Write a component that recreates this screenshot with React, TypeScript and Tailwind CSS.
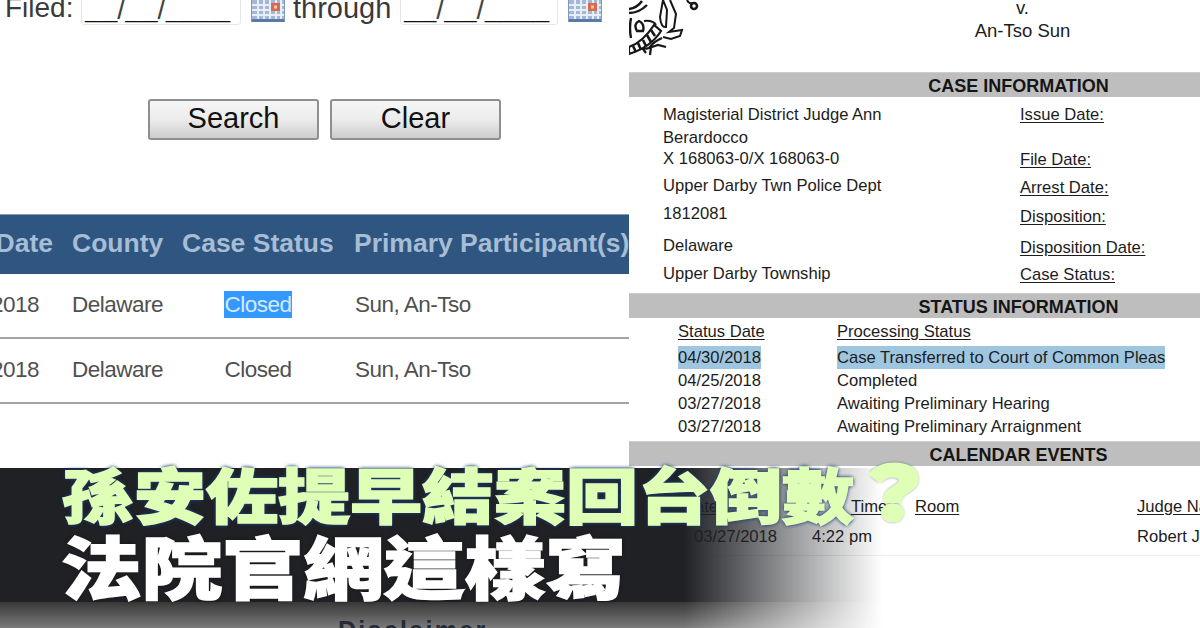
const sans = "font-['Liberation_Sans',Arial,sans-serif]";

function CalIcon() {
  return (
    <svg viewBox="0 0 34 22" className="w-[34px] h-[22px] mt-[8px] shrink-0">
      <rect width="34" height="22" fill="#a3b7d9" />
      <rect y="19" width="34" height="3" fill="#5c7aa6" />
      <rect x="0" width="1" height="22" fill="#7f98bf" />
      <rect x="33" width="1" height="22" fill="#7f98bf" />
      {[6, 12, 18, 24, 29].map((x) => (
        <rect key={x} x={x} y="0" width="2" height="19" fill="#e8eef8" />
      ))}
      {[4, 9, 14].map((y) => (
        <rect key={y} x="1" y={y} width="32" height="2" fill="#e8eef8" />
      ))}
      <rect x="20" y="3" width="9" height="8" fill="#d9694a" />
      <rect x="23" y="5.5" width="3" height="3" fill="#f3c9b4" />
    </svg>
  );
}

function Crest() {
  return (
    <svg viewBox="0 0 72 60" className="w-[72px] h-[60px] shrink-0" fill="none" stroke="#161616" strokeWidth="2">
      <path d="M34 0 L31 17 Q32 28 37 27 L38 10 L34 0" />
      <path d="M41 0 L47 14 L45 28 L40 32 L53 30 L51 36 L42 39 L34 37" />
      <path d="M0 9 Q8 8 13 1 M0 13 Q10 13 18 5" strokeWidth="2.4" />
      <circle cx="65" cy="6" r="3" strokeWidth="2.6" />
      <path d="M58 0 Q60 4 63 3" />
      <path d="M0 47 Q14 42 25 25 L32 31 Q22 47 0 54 Z" strokeWidth="2.2" />
      <path d="M4 46 L7 52 M9 43 L12 50 M14 40 L17 46 M18 35 L22 42 M22 30 L26 36" strokeWidth="2.6" />
      <path d="M8 31 Q4 24 10 21 Q16 24 14 31 Z M2 18 Q0 28 2 38" strokeWidth="2.4" />
      <path d="M15 21 Q24 20 27 25" />
      <path d="M33 38 Q24 42 20 48 L29 45 L37 47 M20 48 L14 49 L17 53 M22 47 L21 55" strokeWidth="2.2" />
    </svg>
  );
}

function Bar({ children }: { children: string }) {
  return (
    <div className="h-[25px] bg-[#bebebe] border-t border-[#cdcdcd] flex items-center justify-center pl-[208px] pt-[2px] text-[18px] font-bold text-[#151515] leading-none shrink-0">
      {children}
    </div>
  );
}

function U({ children }: { children: string }) {
  return <span className="underline underline-offset-[2px]">{children}</span>;
}

function Mask({ w }: { w: string }) {
  return (
    <div className={`${w} h-[33px] border border-[#e6e6e6] rounded-[3px] pl-[3px] text-[29px] text-[#111] overflow-hidden whitespace-nowrap`}>
      <span className="font-bold">__</span>
      <span className="font-normal text-[#444]">/</span>
      <span className="font-bold">__</span>
      <span className="font-normal text-[#444]">/</span>
      <span className="font-bold">____</span>
    </div>
  );
}

const statusRows = [
  ["04/25/2018", "Completed"],
  ["03/27/2018", "Awaiting Preliminary Hearing"],
  ["03/27/2018", "Awaiting Preliminary Arraignment"],
];

export default function App() {
  return (
    <div className={`relative w-[1200px] h-[628px] overflow-hidden bg-white flex ${sans}`}>
      {/* Left panel */}
      <div className="w-[629px] shrink-0 h-full overflow-hidden flex flex-col">
        <div className="flex items-start -mt-[8px] h-[33px] text-[29px] leading-[32px] text-[#3a3a3a] shrink-0">
          <div className="w-[81px] pl-[5px] text-[28px]">Filed:</div>
          <Mask w="w-[160px]" />
          <div className="ml-[10px]"><CalIcon /></div>
          <div className="ml-[8px] w-[107px]">through</div>
          <Mask w="w-[158px]" />
          <div className="ml-[10px]"><CalIcon /></div>
        </div>

        <div className="flex gap-[11px] ml-[148px] mt-[74px] shrink-0">
          {["Search", "Clear"].map((t) => (
            <div key={t} className="w-[171px] h-[41px] pb-[2px] rounded-[3px] border-2 border-[#8f8f8f] bg-gradient-to-b from-[#f6f6f6] via-[#ececec] to-[#cdcdcd] flex items-center justify-center text-[29px] text-[#111] leading-none">
              {t}
            </div>
          ))}
        </div>

        <div className="mt-[74px] shrink-0 h-[60px] pb-[2px] bg-[#2f5680] border-t border-[#8a9bb0] grid grid-cols-[72px_110px_172px_1fr] items-center text-[26.5px] font-bold text-[#a7bdd5] whitespace-nowrap leading-none">
          <div className="flex justify-end pr-[19px] overflow-hidden">Date</div>
          <div>County</div>
          <div>Case Status</div>
          <div>Primary Participant(s)</div>
        </div>
        {[true, false].map((hl, i) => (
          <div key={i} className="h-[65px] shrink-0 pb-[1px] border-b-2 border-[#a3a3a3] grid grid-cols-[72px_110px_172px_1fr] items-center text-[22.5px] tracking-[-0.5px] text-[#505050] whitespace-nowrap">
            <div className="flex justify-end pr-[33px] overflow-hidden">2018</div>
            <div>Delaware</div>
            <div className="pr-[20px] text-center">
              <span className={hl ? "bg-[#3399ff] text-[#d6e9fc] py-[1px]" : ""}>Closed</span>
            </div>
            <div className="pl-[1px]">Sun, An-Tso</div>
          </div>
        ))}
        <div className="mt-[212px] ml-[338px] text-[25px] font-bold tracking-[2.3px] text-[#2b3d55] leading-[28px] shrink-0">Disclaimer</div>
      </div>

      {/* Right panel */}
      <div className="flex-1 min-w-0 h-full flex flex-col overflow-hidden text-[16.6px] text-[#1c1c1c]">
        <div className="flex h-[72px] shrink-0">
          <Crest />
          <div className="flex-1 pl-[144px] text-center text-[18.5px] leading-[23px] -mt-[4px]">
            <div>v.</div>
            <div>An-Tso Sun</div>
          </div>
        </div>
        <Bar>CASE INFORMATION</Bar>

        <div className="h-[196px] shrink-0 flex pt-[6px] leading-[23px] whitespace-nowrap">
          <div className="w-[391px] pl-[34px] flex flex-col">
            <div>Magisterial District Judge Ann</div>
            <div>Berardocco</div>
            <div className="-mt-[2px]">X 168063-0/X 168063-0</div>
            <div className="mt-[4px]">Upper Darby Twn Police Dept</div>
            <div className="mt-[5px]">1812081</div>
            <div className="mt-[9px]">Delaware</div>
            <div className="mt-[5px]">Upper Darby Township</div>
          </div>
          <div className="flex flex-col">
            <U>Issue Date:</U>
            <div className="mt-[22px]"><U>File Date:</U></div>
            <div className="mt-[5px]"><U>Arrest Date:</U></div>
            <div className="mt-[6px]"><U>Disposition:</U></div>
            <div className="mt-[8px]"><U>Disposition Date:</U></div>
            <div className="mt-[4px]"><U>Case Status:</U></div>
          </div>
        </div>

        <Bar>STATUS INFORMATION</Bar>

        <div className="h-[123px] shrink-0 flex flex-col pl-[49px] leading-[23px] whitespace-nowrap pt-[2px]">
          <div className="grid grid-cols-[159px_1fr] mb-[3px]">
            <U>Status Date</U>
            <U>Processing Status</U>
          </div>
          <div className="grid grid-cols-[159px_1fr]">
            <div><span className="bg-[#9fc6e0] py-[2px]">04/30/2018</span></div>
            <div><span className="bg-[#9fc6e0] py-[2px]">Case Transferred to Court of Common Pleas</span></div>
          </div>
          {statusRows.map(([d, s], i) => (
            <div key={i} className="grid grid-cols-[159px_1fr]">
              <div>{d}</div>
              <div>{s}</div>
            </div>
          ))}
        </div>

        <Bar>CALENDAR EVENTS</Bar>

        <div className="h-[90px] shrink-0 border-b border-[#eeeeee] pt-[29px] leading-[23px] whitespace-nowrap grid grid-cols-[54px_129px_103px_222px_1fr] grid-rows-[30px_23px]">
          <div className="col-start-2"><U>Date</U></div>
          <div className="pl-[39px]"><U>Time</U></div>
          <div className="col-start-4"><U>Room</U></div>
          <div className="col-start-5"><U>Judge Name</U></div>
          <div className="col-start-2 pl-[11px]">03/27/2018</div>
          <div>4:22 pm</div>
          <div className="col-start-5">Robert J</div>
        </div>
      </div>

      {/* Banner overlay */}
      <div className="absolute left-0 top-[468px] w-[900px] h-[160px] flex flex-col [mask-image:linear-gradient(90deg,#000_76%,transparent_98%)]">
        <div className="h-[134px] bg-[#1f2125] shrink-0" />
        <div className="h-[26px] bg-gradient-to-b from-[#222222]/90 to-[#222222]/60 shrink-0" />
      </div>
      <div className="absolute left-[62px] top-[456px] font-['Noto_Sans_CJK_TC',sans-serif] font-black whitespace-nowrap leading-none">
        <div className="text-[60px] h-[74px] leading-[74px] origin-left scale-x-[1.2] text-[#e0ffb6] [-webkit-text-stroke:1.6px_#e0ffb6] [text-shadow:0_0_4px_#1f3f7a,0_0_4px_#1f3f7a,0_0_2px_#1f3f7a]">
          孫安佐提早結案回台倒數<span className="text-[70px] leading-[60px] -ml-[2px] [-webkit-text-stroke:5px_#e0ffb6] [text-shadow:0_0_4px_#16306a,0_0_4px_#16306a,0_0_3px_#16306a,0_0_2px_#16306a]">？</span>
        </div>
        <div className="text-[68px] h-[74px] leading-[74px] -mt-[2px] -ml-[1px] origin-left scale-x-[1.187] text-white [-webkit-text-stroke:1.6px_#ffffff] [text-shadow:0_0_4px_#111]">法院官網這樣寫</div>
      </div>
    </div>
  );
}
